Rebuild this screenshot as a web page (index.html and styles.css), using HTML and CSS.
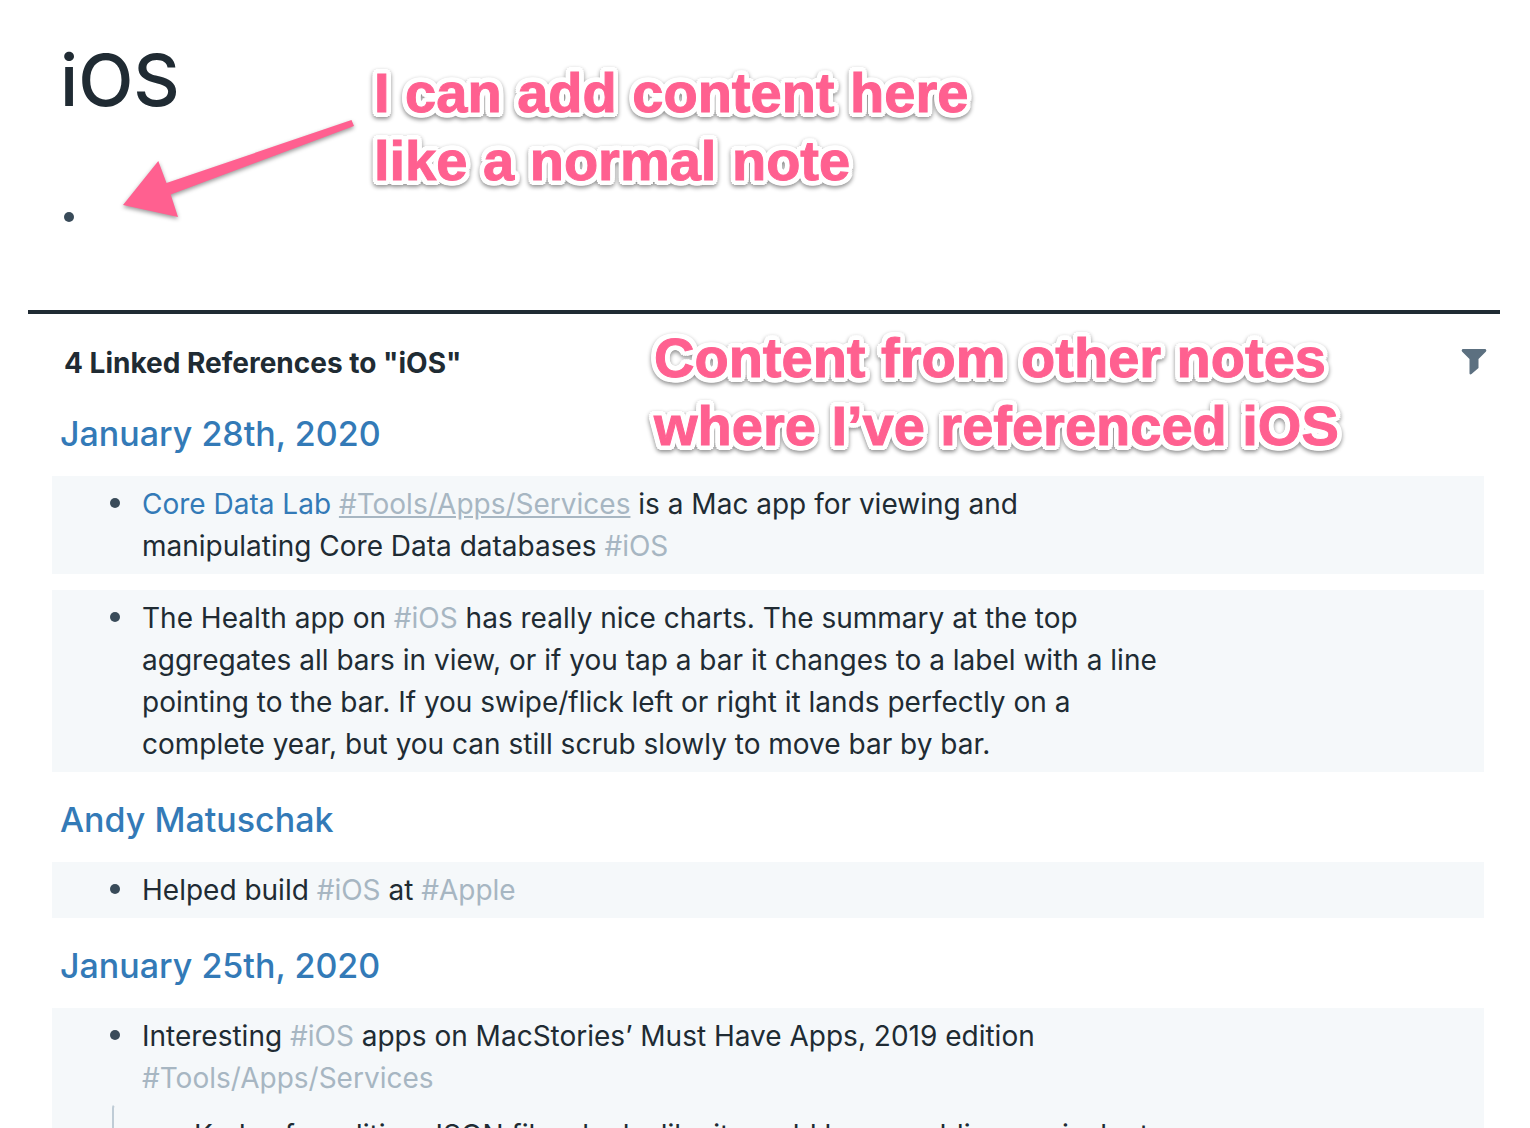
FILE: index.html
```html
<!DOCTYPE html>
<html lang="en">
<head>
<meta charset="utf-8">
<meta name="viewport" content="width=device-width, initial-scale=1">
<title>iOS</title>
<link rel="stylesheet" href="styles.css">
</head>
<body>
<main class="page">
  <header class="page-head">
    <h1 class="page-title">iOS</h1>
    <span class="bullet"></span>
    <svg class="arrow" width="240" height="110" viewBox="0 0 240 110" aria-hidden="true">
      <path d="M3 85 L38.300 41 L46.500 63 L231.500 0 L234 6 L50.700 74.500 L58 97 Z"/>
    </svg>
    <p class="note note-top">I can add content here<br>like a normal note</p>
  </header>

  <section class="references">
    <div class="references-head">
      <h2 class="references-title">4 Linked References to "iOS"</h2>
      <button class="filter" type="button" aria-label="Filter">
        <svg width="26" height="26" viewBox="0 0 26 26" aria-hidden="true"><path d="M1.500 0H24.500Q26 1 25 2.500L17.500 10V19L10.500 25Q9 26 8.500 24.500V10L1 2.500Q0 1 1.500 0Z"/></svg>
      </button>
      <p class="note note-refs">Content from other notes<br>where I’ve referenced iOS</p>
    </div>

    <article class="source">
      <h3 class="source-title"><a href="#">January 28th, 2020</a></h3>
      <ul class="blocks">
        <li class="block"><span class="bullet"></span><p class="text"><a href="#">Core Data Lab</a> <a class="tag tag-active" href="#">#Tools/Apps/Services</a> is a Mac app for viewing and manipulating Core Data databases <a class="tag" href="#">#iOS</a></p></li>
        <li class="block"><span class="bullet"></span><p class="text">The Health app on <a class="tag" href="#">#iOS</a> has really nice charts. The summary at the top aggregates all bars in view, or if you tap a bar it changes to a label with a line pointing to the bar. If you swipe/flick left or right it lands perfectly on a complete year, but you can still scrub slowly to move bar by bar.</p></li>
      </ul>
    </article>

    <article class="source">
      <h3 class="source-title"><a href="#">Andy Matuschak</a></h3>
      <ul class="blocks">
        <li class="block"><span class="bullet"></span><p class="text">Helped build <a class="tag" href="#">#iOS</a> at <a class="tag" href="#">#Apple</a></p></li>
      </ul>
    </article>

    <article class="source">
      <h3 class="source-title"><a href="#">January 25th, 2020</a></h3>
      <ul class="blocks">
        <li class="block"><span class="bullet"></span><p class="text">Interesting <a class="tag" href="#">#iOS</a> apps on MacStories’ Must Have Apps, 2019 edition <a class="tag" href="#">#Tools/Apps/Services</a></p>
          <ul class="children"><li><p class="text">Kodex for editing JSON files, looks like it would be my adding equivalent</p></li></ul>
        </li>
      </ul>
    </article>
  </section>
</main>
</body>
</html>
```
FILE: styles.css
```css
* { box-sizing: border-box; }
body {
  margin: 0;
  height: 100vh;
  overflow: hidden;
  background: #fff;
  color: #202b33;
  font: 430 28px/42px Inter, "Liberation Sans", sans-serif;
}
h1, h2, h3, p, ul { margin: 0; padding: 0; }
ul { list-style: none; }
a { color: #337ab7; text-decoration: none; }

.page { padding: 0 30px 0 28px; }
.page-head { position: relative; padding: 32px 32px 88px; }
.page-title { margin-bottom: 84px; font-size: 72px; line-height: 96px; font-weight: 480; }
.bullet {
  flex: none;
  display: block;
  width: 10px;
  height: 10px;
  border-radius: 50%;
  background: #394b59;
}
.page-head .bullet { margin-left: 4px; }

/* Hand-placed annotations that lie over the page */
.arrow {
  position: absolute;
  left: 92px;
  top: 120px;
  fill: #ff6090;
  overflow: visible;
  filter: drop-shadow(0 2px 2px rgba(0, 0, 0, .4));
}
.note {
  position: absolute;
  color: #ff6090;
  font: 700 56px/68px "Liberation Sans", Arial, sans-serif;
  white-space: nowrap;
  -webkit-text-stroke: 1px #ff6090;
  text-shadow:
    5px 0 #fff, -5px 0 #fff, 0 5px #fff, 0 -5px #fff,
    4px 4px #fff, -4px 4px #fff, 4px -4px #fff, -4px -4px #fff,
    5px 2px #fff, -5px 2px #fff, 5px -2px #fff, -5px -2px #fff,
    2px 5px #fff, -2px 5px #fff, 2px -5px #fff, -2px -5px #fff;
  filter: drop-shadow(0 2px 2px rgba(0, 0, 0, .45));
}
.note-top { left: 346px; top: 59px; }
.note-refs { left: 590px; top: 10px; }

.references { border-top: 4px solid #202b33; padding: 0 16px 0 24px; }
.references-head {
  position: relative;
  display: flex;
  justify-content: space-between;
  align-items: center;
  margin: 0 -4px 0 12px;
  padding: 28px 0 20px;
}
.references-title { font-size: 28px; line-height: 42px; font-weight: 700; }
.filter { display: flex; padding: 0 1px 2px 0; border: 0; background: none; fill: #5c7080; }

.source-title { padding: 8px 8px 20px; font-size: 34px; line-height: 44px; font-weight: 530; }
.source + .source { margin-top: 18px; }
.blocks { display: flex; flex-direction: column; gap: 16px; }
.block {
  display: flex;
  flex-wrap: wrap;
  padding: 7px 0 7px 58px;
  background: #f5f8fa;
}
.block .bullet { margin: 15px 22px 0 0; }
.text { width: 1040px; max-width: calc(100% - 64px); }
.tag { color: #a7b6c2; }
.tag-active { text-decoration: underline; }
.children {
  flex: 1 0 100%;
  margin: 5px 16px 0 2px;
  padding: 8px 0 0 80px;
  border: 2px solid transparent;
  border-left-color: #bfccd6;
  border-radius: 4px;
}
```
